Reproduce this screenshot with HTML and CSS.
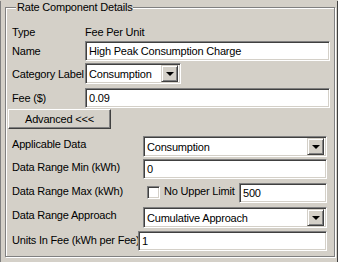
FILE: index.html
```html
<!DOCTYPE html>
<html lang="en">
<head>
<meta charset="UTF-8">
<title>Rate Component Details</title>
<link rel="stylesheet" href="styles.css">
</head>
<body>

<div class="frame">
  <fieldset class="group">
    <legend>Rate Component Details</legend>

    <div class="row row-type">
      <span class="lbl">Type</span>
      <span class="val">Fee Per Unit</span>
    </div>

    <div class="row row-name">
      <span class="lbl">Name</span>
      <div class="tb tb-wide">High Peak Consumption Charge</div>
    </div>

    <div class="row row-cat">
      <span class="lbl">Category Label</span>
      <div class="combo combo-small">
        <span class="combo-text">Consumption</span>
        <span class="drop"><i class="arrow"></i></span>
      </div>
    </div>

    <div class="row row-fee">
      <span class="lbl">Fee ($)</span>
      <div class="tb tb-wide">0.09</div>
    </div>

    <div class="btn-adv">Advanced &lt;&lt;&lt;</div>

    <div class="row low row-app">
      <span class="lbl lbl-low">Applicable Data</span>
      <div class="combo combo-low">
        <span class="combo-text">Consumption</span>
        <span class="drop"><i class="arrow"></i></span>
      </div>
    </div>

    <div class="row low row-min">
      <span class="lbl lbl-low">Data Range Min (kWh)</span>
      <div class="tb tb-low">0</div>
    </div>

    <div class="row low row-max">
      <span class="lbl lbl-low">Data Range Max (kWh)</span>
      <span class="check"></span>
      <span class="check-text">No Upper Limit</span>
      <div class="tb tb-max">500</div>
    </div>

    <div class="row low row-appr">
      <span class="lbl lbl-low">Data Range Approach</span>
      <div class="combo combo-low">
        <span class="combo-text">Cumulative Approach</span>
        <span class="drop"><i class="arrow"></i></span>
      </div>
    </div>

    <div class="row low row-units">
      <span class="lbl lbl-units">Units In Fee (kWh per Fee)</span>
      <div class="tb tb-units">1</div>
    </div>
  </fieldset>
</div>

</body>
</html>
```

FILE: styles.css
```css
body {
  margin: 0;
  padding: 0;
  background: #d4d0c8;
  font-family: "Liberation Sans", Arial, sans-serif;
  font-size: 11px;
  letter-spacing: -0.2px;
  color: #000;
}

.frame {
  width: 338px;
  height: 262px;
  box-sizing: border-box;
  padding: 0 4px 3px 4px;
  border-left: 1px solid #808080;
  box-shadow: inset -5px 0 0 -4px #404040;
}

.group {
  margin: 1px 0 0 0;
  padding: 5px 4px 0 6px;
  height: 256px;
  box-sizing: border-box;
  border: 1px solid #808080;
  box-shadow: inset 1px 1px 0 #fff, 1px 1px 0 #fff;
}

.group legend {
  padding: 0 1px;
  margin-left: 4px;
  background: #d4d0c8;
  line-height: 13px;
}

.row {
  display: flex;
  align-items: center;
}

.lbl {
  width: 73px;
  flex: none;
  white-space: nowrap;
}

.row-type { height: 17px; margin-top: 4px; }
.row-name { height: 20px; margin-top: 1px; }
.row-cat  { height: 21px; margin-top: 2px; }
.row-fee  { height: 20px; margin-top: 4px; }

.tb {
  height: 20px;
  box-sizing: border-box;
  background: #fff;
  border: 1px solid;
  border-color: #808080 #fff #fff #808080;
  box-shadow: inset 1px 1px 0 #404040, inset -1px -1px 0 #d4d0c8;
  padding: 0 3px;
  line-height: 18px;
  white-space: nowrap;
  overflow: hidden;
}

.tb-wide { width: 245px; }

.combo {
  height: 21px;
  box-sizing: border-box;
  display: flex;
  align-items: center;
  background: #fff;
  border: 1px solid;
  border-color: #808080 #fff #fff #808080;
  box-shadow: inset 1px 1px 0 #404040, inset -1px -1px 0 #d4d0c8;
  padding: 2px;
}

.combo-small { width: 96px; }

.combo-text {
  flex: 1;
  padding-left: 1px;
  white-space: nowrap;
}

.drop {
  width: 17px;
  height: 17px;
  box-sizing: border-box;
  flex: none;
  display: flex;
  align-items: center;
  justify-content: center;
  background: #d4d0c8;
  border: 1px solid;
  border-color: #d4d0c8 #404040 #404040 #d4d0c8;
  box-shadow: inset 1px 1px 0 #fff, inset -1px -1px 0 #808080;
}

.arrow {
  width: 0;
  height: 0;
  border-left: 4px solid transparent;
  border-right: 4px solid transparent;
  border-top: 4px solid #000;
  margin-top: 1px;
}

.btn-adv {
  width: 103px;
  height: 20px;
  box-sizing: border-box;
  margin: 1px 0 0 -4px;
  text-align: center;
  line-height: 18px;
  background: #d4d0c8;
  border: 1px solid;
  border-color: #fff #404040 #404040 #fff;
  box-shadow: inset -1px -1px 0 #808080;
}

.low {
  align-items: flex-start;
}

.lbl-low {
  width: 131px;
  padding-top: 2px;
}

.row-app   { height: 21px; margin-top: 7px; }
.row-min   { height: 20px; margin-top: 2px; }
.row-max   { height: 20px; margin-top: 4px; }
.row-appr  { height: 21px; margin-top: 4px; }
.row-units { height: 20px; margin-top: 3px; }

.combo-low { width: 184px; }
.tb-low { width: 184px; }

.check {
  width: 13px;
  height: 13px;
  box-sizing: border-box;
  margin: 3px 0 0 4px;
  background: #fff;
  border: 1px solid;
  border-color: #808080 #fff #fff #808080;
  box-shadow: inset 1px 1px 0 #404040, inset -1px -1px 0 #d4d0c8;
}

.check-text {
  margin: 2px 0 0 4px;
  width: 75px;
  white-space: nowrap;
}

.tb-max { width: 88px; }

.lbl-units {
  width: 126px;
  padding-top: 3px;
}

.tb-units { width: 189px; }
```
